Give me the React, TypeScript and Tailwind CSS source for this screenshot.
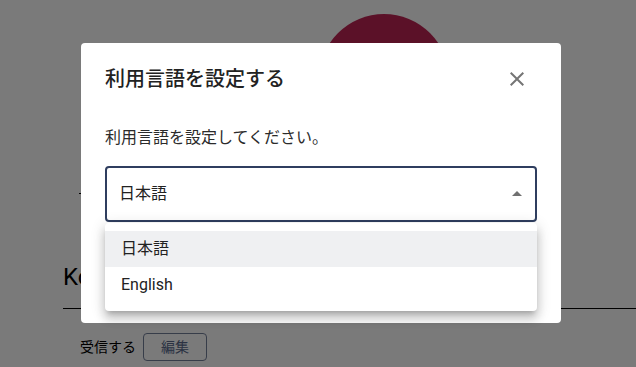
const font = "font-['Roboto','Noto_Sans_CJK_JP',sans-serif]";

const LanguageDialog = () => {
  return (
    <div className="absolute left-[81px] top-[43px] h-[280px] w-[480px] rounded bg-white px-6 pt-4">
      <div className="flex h-10 items-center justify-between">
        <h2 className="text-[20px] font-medium leading-none text-[#222]">利用言語を設定する</h2>
        <button className="flex h-10 w-10 items-center justify-center">
          <svg viewBox="0 0 24 24" className="h-6 w-6 fill-[#757575]">
            <path d="M19 6.41 17.59 5 12 10.59 6.41 5 5 6.41 10.59 12 5 17.59 6.41 19 12 13.41 17.59 19 19 17.59 13.41 12z" />
          </svg>
        </button>
      </div>
      <p className="mt-[27px] text-[16px] leading-6 text-[#2b2b2b]">利用言語を設定してください。</p>
      <div className="relative mt-4">
        <div className="flex h-14 items-center justify-between rounded border-2 border-[#2f3e5f] pl-[12px] pr-[6px]">
          <span className="text-[16px] text-[#222]">日本語</span>
          <svg viewBox="0 0 24 24" className="h-6 w-6 fill-[#707070]">
            <path d="M7 14l5-5 5 5z" />
          </svg>
        </div>
        {/* open menu */}
        <ul className="absolute left-0 right-0 top-full mt-px rounded bg-white py-2 shadow-[0px_5px_5px_-3px_rgba(0,0,0,0.2),0px_8px_10px_1px_rgba(0,0,0,0.14),0px_3px_14px_2px_rgba(0,0,0,0.12)]">
          <li className="flex h-9 items-center bg-[#eff0f2] px-4 text-[16px] text-[#222]">日本語</li>
          <li className="flex h-9 items-center px-4 text-[16px] text-[#222]">English</li>
        </ul>
      </div>
    </div>
  );
};

const App = () => {
  return (
    <div className={`relative h-[367px] w-[636px] overflow-hidden bg-white ${font}`}>
      {/* page behind the modal */}
      <div className="pl-[319px] pt-[14px]">
        <div className="h-[130px] w-[130px] rounded-full bg-[#bf2555]" />
      </div>
      <div className="ml-[79px] mt-[49px] h-px w-[2px] bg-black" />
      <div className="ml-[63px] mt-[67px] border-b border-black pb-[15px]">
        <h1 className="text-[24px] leading-8 text-black">Ko</h1>
      </div>
      <div className="ml-[80px] mt-6 flex items-center gap-[7px]">
        <span className="text-[14px] text-black">受信する</span>
        <button className="flex h-7 w-16 items-center justify-center rounded border border-[#74809a] text-[14px] text-[#5a6a8c]">
          編集
        </button>
      </div>

      <div className="absolute inset-0 bg-black/[0.52]" />
      <LanguageDialog />
    </div>
  );
};

export default App;
